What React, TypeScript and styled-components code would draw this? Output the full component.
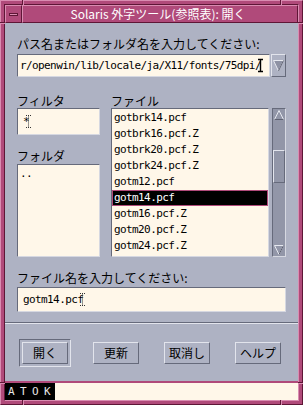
import React from 'react';
import styled, { createGlobalStyle, css } from 'styled-components';

const c = {
  pink: '#b04a7a',
  pinkLight: '#d98cb1',
  pinkDark: '#5e1636',
  gray: '#aeb2c3',
  grayLight: '#e2e4ec',
  grayDark: '#666a7b',
  trough: '#9296a8',
  cream: '#fff7e9',
};

const GlobalStyle = createGlobalStyle`
  html, body { margin: 0; padding: 0; background: #fff; }
  body { font-family: "Noto Sans CJK JP", "DejaVu Sans", sans-serif; }
`;

const raised = css`
  border: 1px solid;
  border-color: ${c.grayLight} ${c.grayDark} ${c.grayDark} ${c.grayLight};
`;

const sunken = css`
  border: 1px solid;
  border-color: ${c.grayDark} ${c.grayLight} ${c.grayLight} ${c.grayDark};
`;

const Frame = styled.div`
  position: relative;
  width: 303px;
  height: 405px;
  box-sizing: border-box;
  background: ${c.pink};
  border: 1px solid;
  border-color: ${c.pinkLight} ${c.pinkDark} ${c.pinkDark} ${c.pinkLight};
  padding: 3px;
`;

const Inner = styled.div`
  height: 100%;
  box-sizing: border-box;
  border: 1px solid;
  border-color: ${c.pinkDark} ${c.pinkLight} ${c.pinkLight} ${c.pinkDark};
  display: flex;
  flex-direction: column;
`;

const Tick = styled.span<{ $x: number; $y: number; $vertical?: boolean }>`
  position: absolute;
  left: ${p => p.$x}px;
  top: ${p => p.$y}px;
  width: ${p => (p.$vertical ? 1 : 5)}px;
  height: ${p => (p.$vertical ? 5 : 1)}px;
  background: ${c.pinkDark};
  box-shadow: ${p => (p.$vertical ? '1px 0 0' : '0 1px 0')} ${c.pinkLight};
`;

const TitleBar = styled.div`
  display: flex;
  height: 18px;
  flex: none;
`;

const MenuButton = styled.div`
  width: 17px;
  box-sizing: border-box;
  border: 1px solid;
  border-color: ${c.pinkLight} ${c.pinkDark} ${c.pinkDark} ${c.pinkLight};
  display: flex;
  align-items: center;
  justify-content: center;
`;

const Dash = styled.span`
  width: 9px;
  height: 3px;
  box-sizing: border-box;
  background: ${c.pinkLight};
  border: 1px solid ${c.pinkDark};
`;

const Title = styled.div`
  flex: 1;
  box-sizing: border-box;
  border: 1px solid;
  border-color: ${c.pinkLight} ${c.pinkDark} ${c.pinkDark} ${c.pinkLight};
  color: #fff;
  font-size: 12px;
  line-height: 16px;
  text-align: center;
  padding-right: 4px;
  white-space: nowrap;
`;

const Content = styled.div`
  height: 358px;
  flex: none;
  box-sizing: border-box;
  background: ${c.gray};
  padding: 13px 12px 0 12px;
  display: flex;
  flex-direction: column;
`;

const Label = styled.div<{ $gap?: number }>`
  font-size: 12px;
  line-height: 15px;
  height: 15px;
  flex: none;
  color: #000;
  margin-top: ${p => p.$gap ?? 0}px;
  white-space: nowrap;
`;

const PathRow = styled.div`
  display: flex;
  height: 23px;
  flex: none;
  margin-top: 3px;
  gap: 1px;
`;

const Field = styled.div<{ $height?: number; $pad?: number; $gap?: number; $grow?: boolean }>`
  flex: ${p => (p.$grow ? '1' : 'none')};
  min-width: 0;
  height: ${p => (p.$height ? `${p.$height}px` : 'auto')};
  margin-top: ${p => p.$gap ?? 0}px;
  box-sizing: border-box;
  background: ${c.cream};
  border: 1px solid;
  border-color: ${c.grayDark} #d6d8e1 #d6d8e1 ${c.grayDark};
  padding-left: ${p => p.$pad ?? 2}px;
  display: flex;
  align-items: center;
  overflow: hidden;
  font-family: "DejaVu Sans Mono", monospace;
  font-size: 11px;
  letter-spacing: -0.6px;
  white-space: nowrap;
  color: #000;
`;

const ComboArrow = styled.div`
  width: 15px;
  box-sizing: border-box;
  ${raised};
  display: flex;
  align-items: center;
  justify-content: center;
`;

const Columns = styled.div`
  display: grid;
  grid-template-columns: 83px 175px;
  column-gap: 11px;
  margin-top: 16px;
  flex: none;
`;

const Column = styled.div`
  display: flex;
  flex-direction: column;
`;

const ListRow = styled.div`
  display: flex;
  gap: 3px;
  height: 149px;
`;

const ListBox = styled.div<{ $height?: number; $gap?: number }>`
  flex: ${p => (p.$height ? 'none' : '1')};
  height: ${p => (p.$height ? `${p.$height}px` : 'auto')};
  margin-top: ${p => p.$gap ?? 0}px;
  box-sizing: border-box;
  background: ${c.cream};
  border: 1px solid;
  border-color: ${c.grayDark} #d6d8e1 #d6d8e1 ${c.grayDark};
  padding: 1px 0;
  overflow: hidden;
  font-family: "DejaVu Sans Mono", monospace;
  font-size: 11px;
  letter-spacing: -0.6px;
`;

const Item = styled.div<{ $selected?: boolean }>`
  height: 16px;
  line-height: 14px;
  box-sizing: border-box;
  padding-left: 1px;
  border: 1px solid ${p => (p.$selected ? c.pink : 'transparent')};
  background: ${p => (p.$selected ? '#000' : 'transparent')};
  color: ${p => (p.$selected ? '#fff' : '#000')};
  white-space: nowrap;
`;

const ScrollBar = styled.div`
  width: 14px;
  box-sizing: border-box;
  background: ${c.trough};
  border: 1px solid;
  border-color: ${c.grayDark} #d6d8e1 #d6d8e1 ${c.grayDark};
  display: flex;
  flex-direction: column;
`;

const ScrollArrow = styled.div`
  height: 12px;
  display: flex;
  align-items: center;
  justify-content: center;
`;

const Thumb = styled.div`
  margin-top: 29px;
  height: 33px;
  box-sizing: border-box;
  border: 1px solid;
  border-color: ${c.grayLight} ${c.grayDark} ${c.grayDark} ${c.grayLight};
  background: ${c.trough};
`;

const Spacer = styled.div`
  flex: 1;
`;

const Separator = styled.div`
  margin: 10px -12px 0;
  height: 1px;
  flex: none;
  background: ${c.grayDark};
  border-bottom: 1px solid ${c.grayLight};
`;

const ButtonRow = styled.div`
  display: flex;
  align-items: center;
  justify-content: space-between;
  height: 29px;
  flex: none;
  margin-top: 14px;
  padding: 0 5px;
`;

const Button = styled.div`
  width: 46px;
  height: 22px;
  box-sizing: border-box;
  ${raised};
  background: ${c.gray};
  font-size: 12px;
  line-height: 20px;
  text-align: center;
  color: #000;
`;

const DefaultRing = styled.div`
  margin: -3px;
  padding: 2px;
  ${sunken};
  display: flex;
`;

const AtokBar = styled.div`
  margin-top: 2px;
  height: 17px;
  flex: none;
  display: flex;
  background: ${c.cream};
`;

const AtokTag = styled.div`
  width: 50px;
  background: #000;
  color: #e6e6e6;
  font-family: "DejaVu Sans Mono", monospace;
  font-size: 11px;
  line-height: 17px;
  letter-spacing: 5.4px;
  padding-left: 3px;
  box-sizing: border-box;
  white-space: nowrap;
  overflow: hidden;
`;

const Caret = ({ dotted }: { dotted?: boolean }) => (
  <svg width="7" height="15" viewBox="0 0 7 15" style={{ marginLeft: -4, flex: 'none' }}>
    <path
      d="M1 1.5h5M1 13.5h5M3.5 1.5v12"
      stroke={dotted ? '#333' : '#000'}
      strokeWidth={dotted ? 1 : 1.4}
      strokeDasharray={dotted ? '1 1' : undefined}
      fill="none"
    />
  </svg>
);

const files = [
  'gotbrk14.pcf',
  'gotbrk16.pcf.Z',
  'gotbrk20.pcf.Z',
  'gotbrk24.pcf.Z',
  'gotm12.pcf',
  'gotm14.pcf',
  'gotm16.pcf.Z',
  'gotm20.pcf.Z',
  'gotm24.pcf.Z',
];

export default function App() {
  return (
    <>
      <GlobalStyle />
      <Frame>
        <Tick $x={21} $y={-1} $vertical />
        <Tick $x={279} $y={-1} $vertical />
        <Tick $x={21} $y={399} $vertical />
        <Tick $x={279} $y={399} $vertical />
        <Tick $x={-1} $y={21} />
        <Tick $x={-1} $y={381} />
        <Tick $x={297} $y={21} />
        <Tick $x={297} $y={381} />
        <Inner>
          <TitleBar>
            <MenuButton>
              <Dash />
            </MenuButton>
            <Title>Solaris 外字ツール(参照表): 開く</Title>
          </TitleBar>
          <Content>
            <Label>パス名またはフォルダ名を入力してください:</Label>
            <PathRow>
              <Field $grow $pad={2}>
                r/openwin/lib/locale/ja/X11/fonts/75dpi/
                <Caret />
              </Field>
              <ComboArrow>
                <svg width="11" height="13" viewBox="0 0 11 13">
                  <path d="M0.5 1.5h10L5.5 12z" fill="#8e92a4" stroke="#e6e8ef" strokeWidth="1" />
                  <path d="M10.5 1.5L5.5 12" stroke="#5f6272" strokeWidth="1" />
                </svg>
              </ComboArrow>
            </PathRow>
            <Columns>
              <Column>
                <Label>フィルタ</Label>
                <Field $height={27} $pad={5}>
                  *
                  <Caret dotted />
                </Field>
                <Label $gap={13}>フォルダ</Label>
                <ListBox $height={93} $gap={1}>
                  <Item>..</Item>
                </ListBox>
              </Column>
              <Column>
                <Label>ファイル</Label>
                <ListRow>
                  <ListBox>
                    {files.map(f => (
                      <Item key={f} $selected={f === 'gotm14.pcf'}>
                        {f}
                      </Item>
                    ))}
                  </ListBox>
                  <ScrollBar>
                    <ScrollArrow>
                      <svg width="10" height="10" viewBox="0 0 10 10">
                        <path d="M5 0.5L9.5 9.5H0.5z" fill={c.trough} stroke="#e6e8ef" strokeWidth="1" />
                        <path d="M9.5 9.5H0.5" stroke="#5f6272" strokeWidth="1" />
                      </svg>
                    </ScrollArrow>
                    <Thumb />
                    <Spacer />
                    <ScrollArrow>
                      <svg width="10" height="10" viewBox="0 0 10 10">
                        <path d="M0.5 0.5H9.5L5 9.5z" fill={c.trough} stroke="#e6e8ef" strokeWidth="1" />
                        <path d="M9.5 0.5L5 9.5" stroke="#5f6272" strokeWidth="1" />
                      </svg>
                    </ScrollArrow>
                  </ScrollBar>
                </ListRow>
              </Column>
            </Columns>
            <Label $gap={13}>ファイル名を入力してください:</Label>
            <Field $height={25} $pad={5} $gap={2}>
              gotm14.pcf
              <Caret dotted />
            </Field>
            <Separator />
            <ButtonRow>
              <DefaultRing>
                <Button>開く</Button>
              </DefaultRing>
              <Button>更新</Button>
              <Button>取消し</Button>
              <Button>ヘルプ</Button>
            </ButtonRow>
          </Content>
          <AtokBar>
            <AtokTag>ATOK</AtokTag>
          </AtokBar>
        </Inner>
      </Frame>
    </>
  );
}
